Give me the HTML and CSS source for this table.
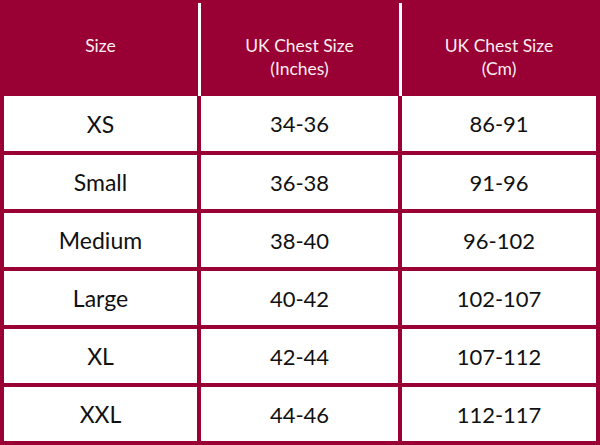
FILE: index.html
```html
<!DOCTYPE html>
<html lang="en">
<head>
<meta charset="utf-8">
<title>Size Chart</title>
<link rel="stylesheet" href="styles.css">
</head>
<body>
<div class="chart">
  <div class="head">
    <div class="th">Size</div>
    <div class="th">UK Chest Size<br>(Inches)</div>
    <div class="th">UK Chest Size<br>(Cm)</div>
  </div>
  <div class="rows">
    <div class="td size">XS</div><div class="td num">34-36</div><div class="td num">86-91</div>
    <div class="td size">Small</div><div class="td num">36-38</div><div class="td num">91-96</div>
    <div class="td size">Medium</div><div class="td num">38-40</div><div class="td num">96-102</div>
    <div class="td size">Large</div><div class="td num">40-42</div><div class="td num">102-107</div>
    <div class="td size">XL</div><div class="td num">42-44</div><div class="td num">107-112</div>
    <div class="td size">XXL</div><div class="td num">44-46</div><div class="td num">112-117</div>
  </div>
</div>
</body>
</html>
```
FILE: styles.css
```css
html, body {
  margin: 0;
  padding: 0;
  background: #ffffff;
}

.chart {
  width: 600px;
  height: 445px;
  box-sizing: border-box;
  background: #990033;
  padding: 3px 4px 4px 4px;
  display: flex;
  flex-direction: column;
}

.head,
.rows {
  display: grid;
  grid-template-columns: 193px 197px 194px;
  column-gap: 4px;
}

.head {
  height: 93px;
}

.th {
  background: #990033;
  color: #fbeef2;
  font-family: "Lato", "Liberation Sans", sans-serif;
  font-size: 17.5px;
  line-height: 23px;
  text-align: center;
  padding-top: 31px;
}

.th + .th {
  box-shadow: -3px 0 0 #ffffff;
}

.rows {
  grid-template-rows: 55px repeat(5, 54px);
  row-gap: 4px;
}

.td {
  background: #ffffff;
  color: #111111;
  display: flex;
  align-items: center;
  justify-content: center;
  font-family: "Lato", "Liberation Sans", sans-serif;
}

.size {
  font-size: 23px;
}

.num {
  font-size: 22px;
}
```
